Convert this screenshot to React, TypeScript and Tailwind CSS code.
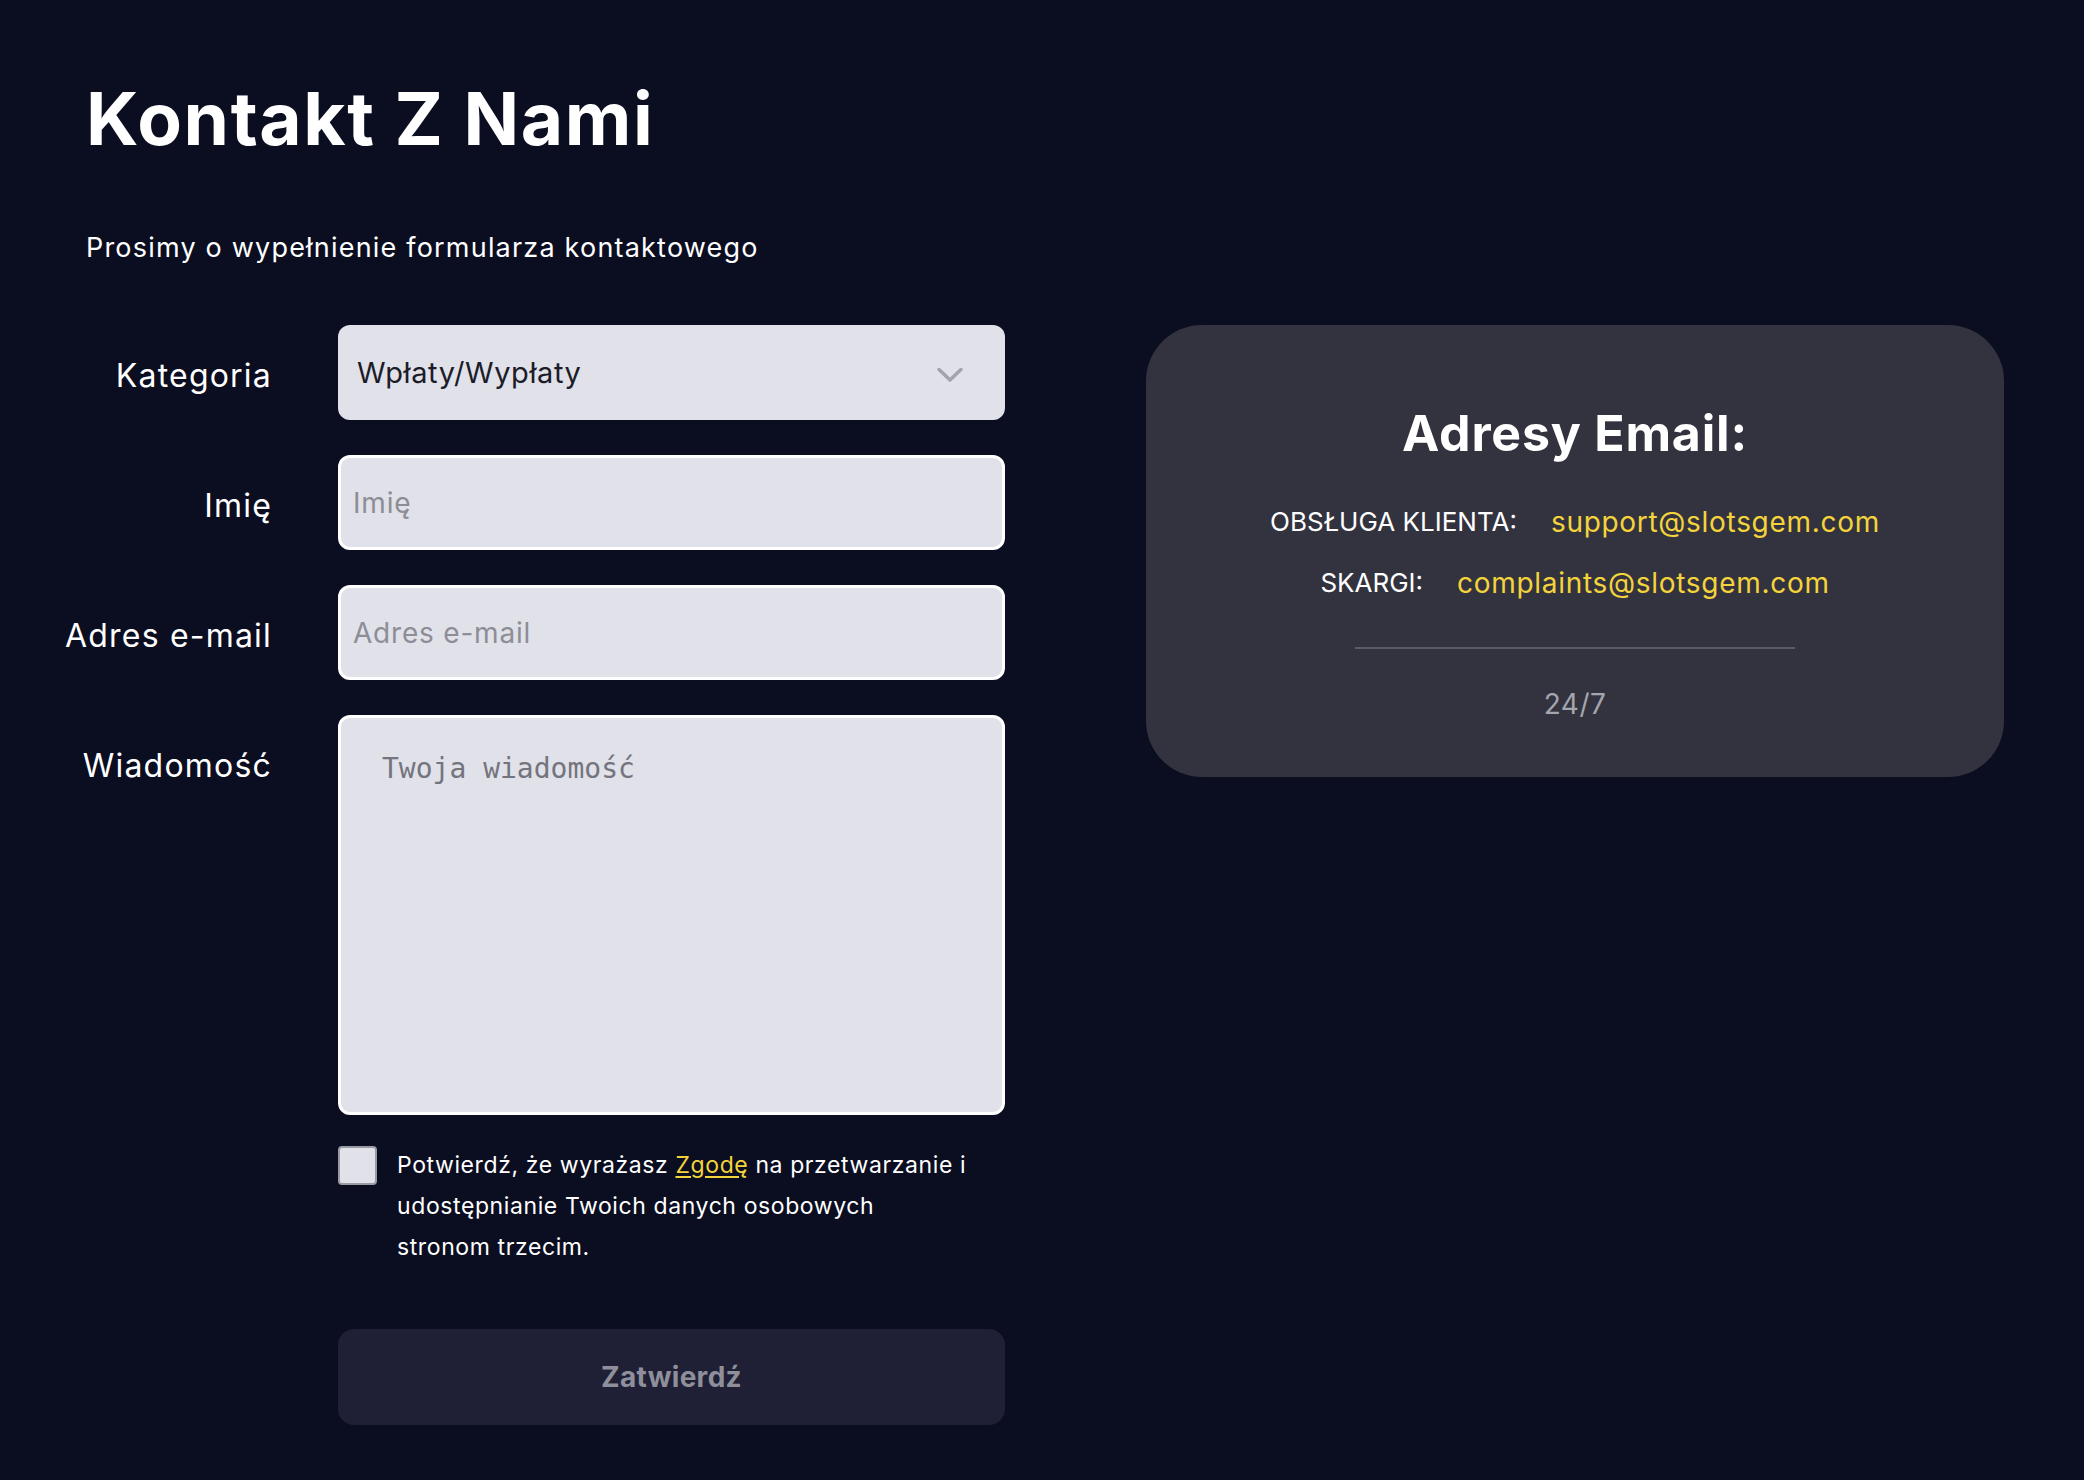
import React, { useState } from 'react';

const App: React.FC = () => {
  const [category, setCategory] = useState('Wpłaty/Wypłaty');
  const [agree, setAgree] = useState(false);

  return (
    <div className="min-h-screen bg-[#0b0d20] font-['Inter','Liberation_Sans',sans-serif] text-white pb-[57px]">
      <h1 className="pl-[86px] pt-[82px] text-[73px] leading-none font-bold tracking-[1.6px]">Kontakt Z Nami</h1>
      <p className="pl-[86px] mt-[77px] text-[27px] leading-[32px] tracking-[1.2px]">Prosimy o wypełnienie formularza kontaktowego</p>

      <div className="flex items-start mt-[61px]">
        {/* Form */}
        <div className="grid grid-cols-[272px_667px] gap-x-[66px] gap-y-[35px]">
          <label className="h-[95px] pt-[6px] flex items-center justify-end text-[32px] tracking-[1.2px]">Kategoria</label>
          <div className="relative h-[95px] rounded-[12px] bg-[#e0e1e9]">
            <select
              value={category}
              onChange={(e) => setCategory(e.target.value)}
              className="appearance-none w-full h-full bg-transparent pl-[19px] text-[29px] tracking-[0.6px] text-[#1c1c28] outline-none"
            >
              <option>Wpłaty/Wypłaty</option>
              <option>Konto</option>
              <option>Bonusy</option>
            </select>
            <svg className="absolute right-[41px] top-[42px] pointer-events-none" width="28" height="16" viewBox="0 0 28 16" fill="none">
              <path d="M3 2.5 L14 13 L25 2.5" stroke="#a3a3ab" strokeWidth="3.5" strokeLinecap="round" strokeLinejoin="round" />
            </svg>
          </div>

          <label className="h-[95px] pt-[6px] flex items-center justify-end text-[32px] tracking-[1.2px]">Imię</label>
          <input
            placeholder="Imię"
            className="h-[95px] rounded-[12px] border-[3px] border-white bg-[#e0e1e9] pl-[12px] text-[28px] tracking-[0.8px] text-[#1c1c28] placeholder:text-[#8d8d96] outline-none"
          />

          <label className="h-[95px] pt-[6px] flex items-center justify-end text-[32px] tracking-[1.2px]">Adres e-mail</label>
          <input
            placeholder="Adres e-mail"
            className="h-[95px] rounded-[12px] border-[3px] border-white bg-[#e0e1e9] pl-[12px] text-[28px] tracking-[0.8px] text-[#1c1c28] placeholder:text-[#8d8d96] outline-none"
          />

          <label className="h-[95px] pt-[6px] flex items-center justify-end text-[32px] tracking-[1.2px]">Wiadomość</label>
          <textarea
            placeholder="Twoja wiadomość"
            className="h-[400px] resize-none rounded-[12px] border-[3px] border-white bg-[#e0e1e9] pl-[41px] pt-[30px] font-['DejaVu_Sans_Mono',monospace] text-[28px] text-[#1c1c28] placeholder:text-[#74747e] outline-none"
          />

          <div />
          <div className="-mt-[5px]">
            <div className="flex items-start gap-[20px]">
              <button
                onClick={() => setAgree(!agree)}
                className="mt-[1px] w-[39px] h-[39px] shrink-0 rounded-[4px] border-2 border-[#9a9aa4] bg-[#e0e1e9]"
              />
              <p className="text-[23px] leading-[41px] tracking-[0.6px]">
                Potwierdź, że wyrażasz <span className="text-[#f5d43b] underline underline-offset-[3px]">Zgodę</span> na przetwarzanie i
                <br />
                udostępnianie Twoich danych osobowych
                <br />
                stronom trzecim.
              </p>
            </div>
            <button className="mt-[61px] w-full h-[96px] rounded-[16px] bg-[#1f2035] text-[28px] font-bold tracking-[0.3px] text-[#8f8f9b]">
              Zatwierdź
            </button>
          </div>
        </div>

        {/* Card */}
        <div className="ml-[141px] w-[858px] h-[452px] rounded-[56px] bg-[#33333f] flex flex-col items-center pt-[78px]">
          <h2 className="text-[50px] leading-[60px] font-bold tracking-[0.8px]">Adresy Email:</h2>
          <div className="mt-[39px] flex gap-[34px] text-[26px] leading-[40px]">
            <span>OBSŁUGA KLIENTA:</span>
            <span className="text-[#f5d43b] text-[28px] tracking-[0.7px]">support@slotsgem.com</span>
          </div>
          <div className="mt-[21px] flex gap-[34px] text-[26px] leading-[40px]">
            <span>SKARGI:</span>
            <span className="text-[#f5d43b] text-[28px] tracking-[0.7px]">complaints@slotsgem.com</span>
          </div>
          <div className="mt-[44px] w-[440px] h-[2px] bg-[#5b5b66]" />
          <div className="mt-[37px] text-[28px] leading-[36px] tracking-[0.5px] text-[#a5a5ad]">24/7</div>
        </div>
      </div>
    </div>
  );
};

export default App;
